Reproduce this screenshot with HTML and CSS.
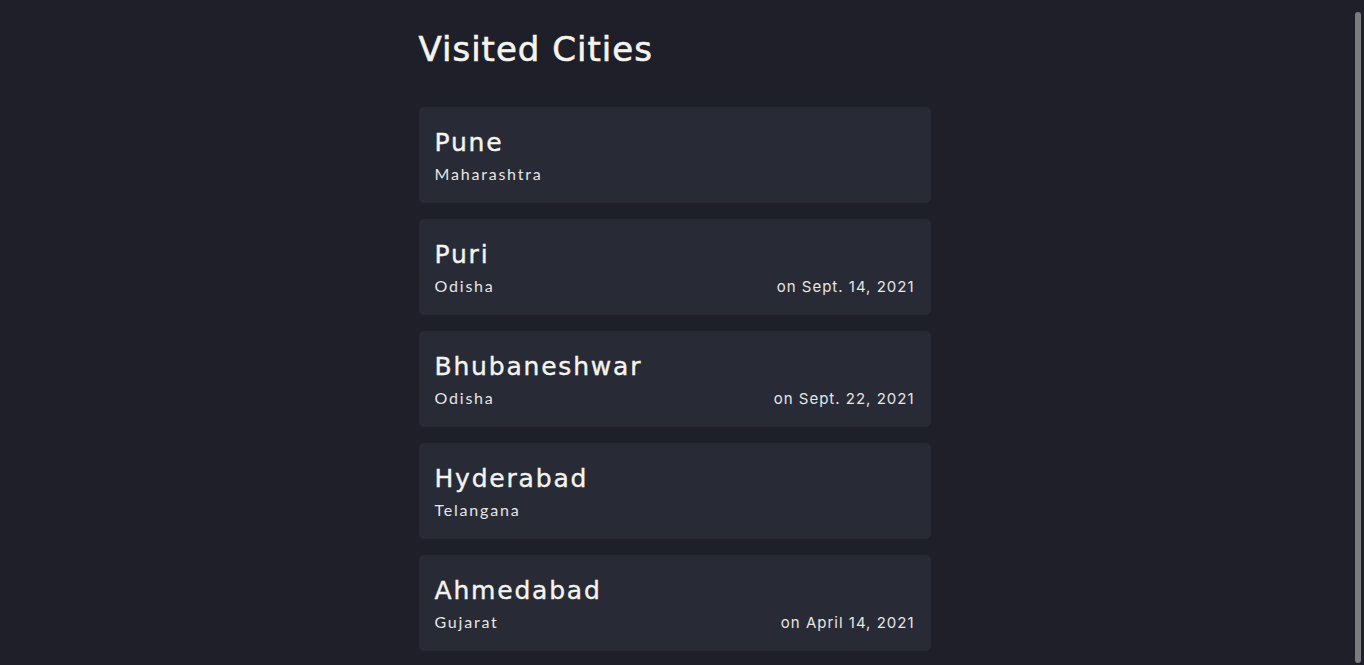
FILE: index.html
```html
<!DOCTYPE html>
<html lang="en">
<head>
<meta charset="utf-8">
<title>Visited Cities</title>
<link rel="stylesheet" href="styles.css">
</head>
<body>
<main class="container">
  <h1 class="title">Visited Cities</h1>
  <ul class="cities">
    <li class="card">
      <h2 class="city">Pune</h2>
      <div class="meta"><span class="state">Maharashtra</span></div>
    </li>
    <li class="card">
      <h2 class="city">Puri</h2>
      <div class="meta"><span class="state">Odisha</span><span class="date">on Sept. 14, 2021</span></div>
    </li>
    <li class="card">
      <h2 class="city">Bhubaneshwar</h2>
      <div class="meta"><span class="state">Odisha</span><span class="date">on Sept. 22, 2021</span></div>
    </li>
    <li class="card">
      <h2 class="city">Hyderabad</h2>
      <div class="meta"><span class="state">Telangana</span></div>
    </li>
    <li class="card">
      <h2 class="city">Ahmedabad</h2>
      <div class="meta"><span class="state">Gujarat</span><span class="date">on April 14, 2021</span></div>
    </li>
  </ul>
</main>
<div class="scrollbar"><div class="thumb"></div></div>
</body>
</html>
```

FILE: styles.css
```css
html {
  background: #1f1f29;
}
body {
  margin: 0;
  padding-right: 15px;
  background: #1f1f29;
  color: #f4f4ef;
  font-family: "Lato", "Noto Sans", sans-serif;
}
.scrollbar {
  position: fixed;
  top: 0;
  right: 0;
  width: 15px;
  height: 100%;
  background: #1f1f29;
}
.thumb {
  position: absolute;
  left: 6px;
  top: 12px;
  bottom: 2px;
  width: 6px;
  border-radius: 3px;
  background: #7b7b80;
}
.container {
  width: 512px;
  margin: 0 auto;
  padding: 29px 0 29px;
}
.title {
  margin: 0 0 38px;
  font-family: "DejaVu Sans", sans-serif;
  font-weight: 500;
  font-size: 34px;
  line-height: 40px;
  letter-spacing: 1px;
  -webkit-text-stroke: 0.6px #f4f4ef;
}
.cities {
  list-style: none;
  margin: 0;
  padding: 0;
  display: flex;
  flex-direction: column;
  gap: 16px;
}
.card {
  background: #282a36;
  border-radius: 5px;
  height: 96px;
  box-sizing: border-box;
  padding: 21px 16px 0;
}
.city {
  margin: 0;
  font-family: "DejaVu Sans", sans-serif;
  font-weight: 500;
  font-size: 25px;
  line-height: 30px;
  letter-spacing: 1.8px;
  -webkit-text-stroke: 0.4px #f4f4ef;
}
.meta {
  display: flex;
  justify-content: space-between;
  align-items: baseline;
  margin-top: 6px;
  font-size: 16px;
  line-height: 20px;
  color: #e6e6e2;
}
.state {
  letter-spacing: 1.8px;
}
.date {
  font-family: "Inter", sans-serif;
  font-size: 15px;
  letter-spacing: 1px;
}
```
